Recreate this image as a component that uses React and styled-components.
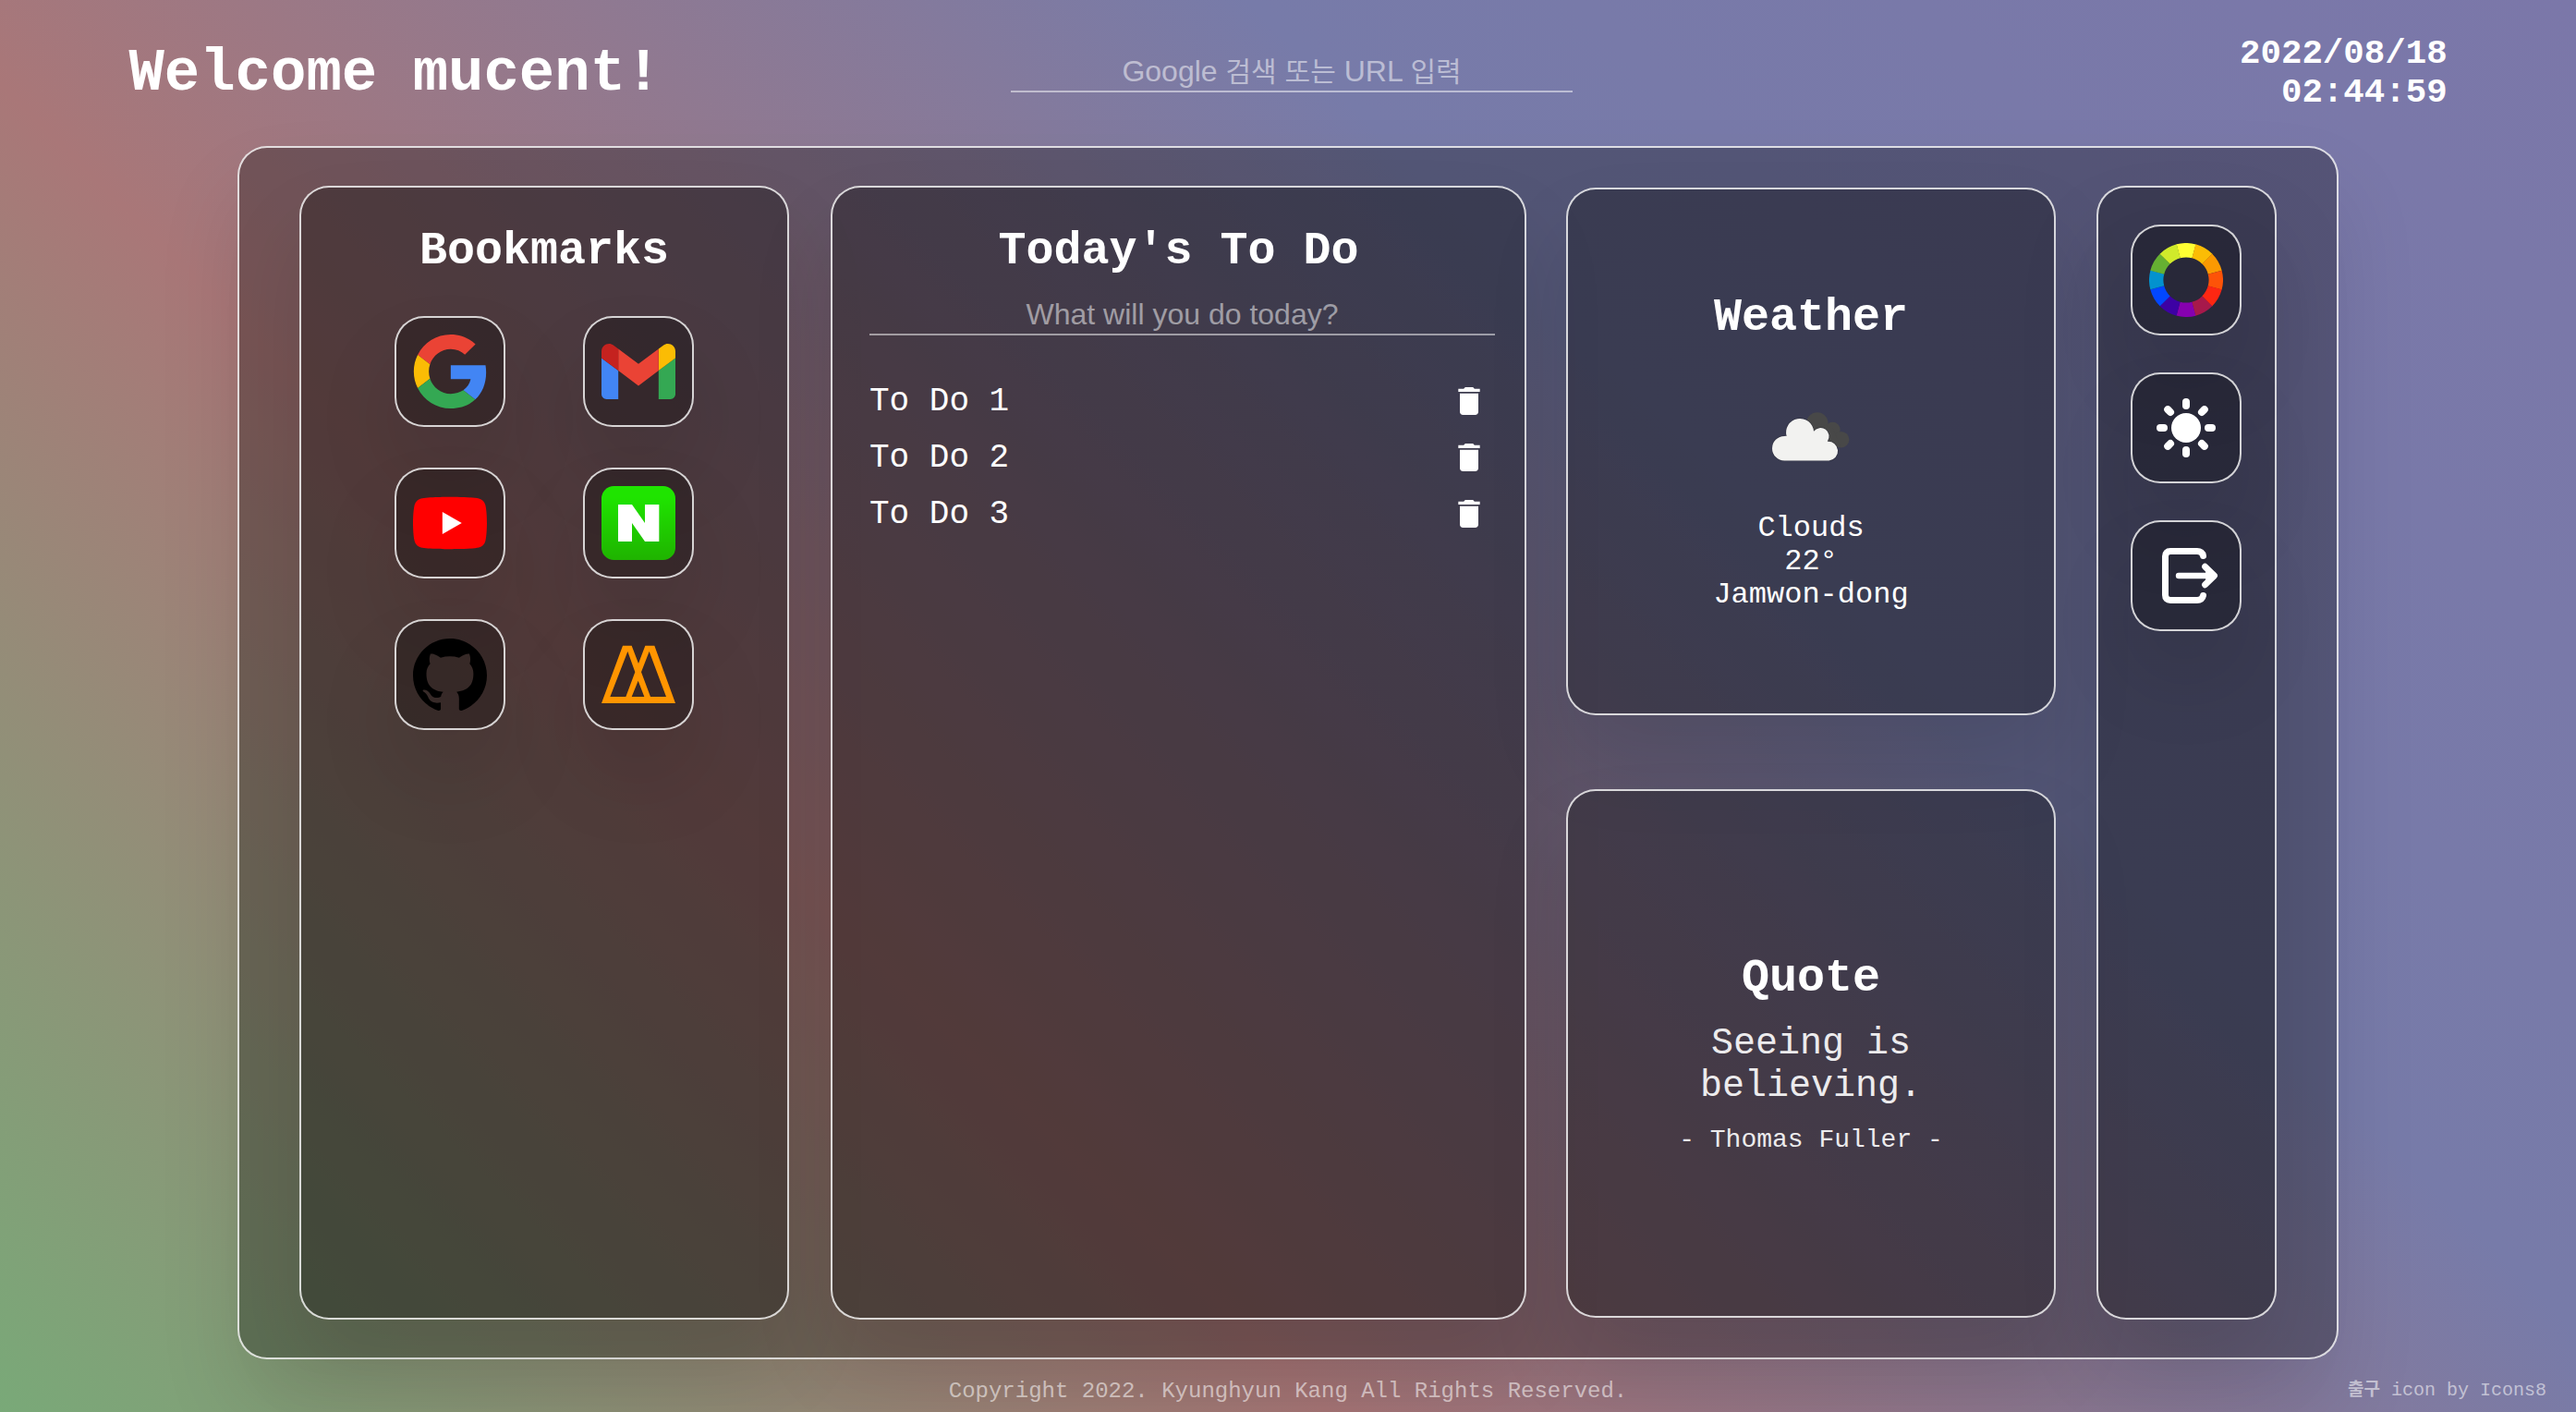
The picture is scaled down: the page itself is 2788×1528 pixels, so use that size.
import React from "react";
import styled, { createGlobalStyle } from "styled-components";
import { MdDelete } from "react-icons/md";

const MONO = '"Courier New", "Liberation Mono", "Noto Sans CJK KR", monospace';
const SANS = '"Liberation Sans", "Noto Sans CJK KR", sans-serif';

const GlobalStyle = createGlobalStyle`
  *, *::before, *::after { box-sizing: border-box; }
  html, body, #root { height: 100%; }
  body {
    margin: 0;
    color: #fff;
    font-family: ${MONO};
    font-size: 32px;
    line-height: 1.1328;
    overflow: hidden;
  }
  h1, h2, h3, p, ul { margin: 0; padding: 0; }
`;

const Page = styled.div`
  display: flex;
  flex-direction: column;
  align-items: center;
  height: 1528px;
  background: linear-gradient(45deg, #79a978, #a97778, #777ba9, #7b77a9);
`;

const Header = styled.header`
  display: grid;
  grid-template-columns: 1fr 608px 1fr;
  align-items: center;
  width: 100%;
  height: 158px;
  padding: 0 139.4px;
`;

const Greeting = styled.h1`
  padding-top: 2px;
  font-size: 64px;
  font-weight: 700;
`;

const Field = styled.div`
  width: ${(p) => p.$width}px;
  height: 43px;
  padding-top: 2px;
  border-bottom: 2px solid rgba(255, 255, 255, 0.5);
  color: rgba(255, 255, 255, 0.5);
  font-family: ${SANS};
  font-size: 32px;
  line-height: 37px;
  text-align: center;
  white-space: nowrap;
`;

const SearchField = styled(Field)`
  margin: -1px 0 0 4px;
`;

const Hangul = styled.span`
  font-size: 30px;
`;

const Clock = styled.h3`
  font-size: 37.44px;
  font-weight: 700;
  text-align: right;
`;

const glass = `
  border: 2px solid rgba(255, 255, 255, 0.8);
  border-radius: 32px;
  background: rgba(0, 0, 0, 0.3);
  box-shadow: 0 50px 90px rgba(0, 0, 0, 0.1);
`;

const Board = styled.main`
  ${glass}
  display: flex;
  flex: none;
  width: 2274px;
  height: 1313px;
  padding: 41px 65px;
`;

const Panel = styled.section`
  ${glass}
  display: flex;
  flex-direction: column;
  align-items: center;
  flex: none;
  width: ${(p) => p.$width}px;
  margin-left: ${(p) => p.$gap || 0}px;
  padding: 40px 0 0;
`;

const Stack = styled.div`
  display: flex;
  flex-direction: column;
  justify-content: space-between;
  width: 530px;
  margin: 2px 0 2px 43px;
`;

const Card = styled.section`
  ${glass}
  display: flex;
  flex-direction: column;
  align-items: center;
  justify-content: center;
  height: ${(p) => p.$height}px;
  text-align: center;
`;

const Title = styled.h2`
  padding-top: 1px;
  font-size: 50px;
  font-weight: 700;
  line-height: 56px;
`;

const LinkGrid = styled.div`
  display: grid;
  grid-template-columns: 120px 120px;
  gap: 44px 84px;
  margin-top: 42px;
`;

const Tile = styled.a`
  ${glass}
  display: flex;
  align-items: center;
  justify-content: center;
  width: 120px;
  height: 120px;
  svg { display: block; width: 80px; height: 80px; }
`;

const TodoField = styled(Field)`
  align-self: flex-start;
  margin: 20px 0 0 40px;
`;

const TodoList = styled.ul`
  display: flex;
  flex-direction: column;
  gap: 20px;
  width: 100%;
  margin-top: 50px;
  padding: 0 40px;
  list-style: none;
`;

const TodoItem = styled.li`
  display: flex;
  align-items: center;
  justify-content: space-between;
  height: 41px;
  font-size: 36px;
  svg { width: 40px; height: 40px; }
`;

const TodoText = styled.span`
  padding-top: 3px;
`;

const Tools = styled.div`
  display: flex;
  flex-direction: column;
  gap: 40px;
  padding-right: 1px;
`;

const CloudIcon = styled.svg`
  width: 84px;
  height: 53px;
  margin: 74px 0 55px;
`;

const Saying = styled.p`
  width: 300px;
  margin: 20px 0;
  font-size: 40px;
  opacity: 0.9;
`;

const Author = styled.p`
  font-size: 28px;
  opacity: 0.9;
`;

const Footer = styled.footer`
  display: grid;
  grid-template-columns: 1fr auto 1fr;
  align-items: center;
  flex: 1;
  width: 100%;
  padding: 11px 32px 0;
  color: rgba(255, 255, 255, 0.55);
  font-size: 24px;
  line-height: 27px;
`;

const Credit = styled.span`
  justify-self: end;
  font-size: 20px;
  line-height: 23px;
`;

const CreditHangul = styled.span`
  font-weight: 700;
  font-size: 19px;
`;

const GoogleLogo = () => (
  <svg viewBox="-0.5 0 48 48">
    <path fill="#EA4335" d="M24 9.5c3.54 0 6.71 1.22 9.21 3.6l6.85-6.85C35.9 2.38 30.47 0 24 0 14.62 0 6.51 5.38 2.56 13.22l7.98 6.19C12.43 13.72 17.74 9.5 24 9.5z" />
    <path fill="#4285F4" d="M46.98 24.55c0-1.57-.15-3.09-.38-4.55H24v9.02h12.94c-.58 2.96-2.26 5.48-4.78 7.18l7.73 6c4.51-4.18 7.09-10.36 7.09-17.65z" />
    <path fill="#FBBC05" d="M10.53 28.59c-.48-1.45-.76-2.99-.76-4.59s.27-3.14.76-4.59l-7.98-6.19C.92 16.46 0 20.12 0 24c0 3.88.92 7.54 2.56 10.78l7.97-6.19z" />
    <path fill="#34A853" d="M24 48c6.48 0 11.93-2.13 15.89-5.81l-7.73-6c-2.15 1.45-4.92 2.3-8.16 2.3-6.26 0-11.57-4.22-13.47-9.91l-7.98 6.19C6.51 42.62 14.62 48 24 48z" />
  </svg>
);

const GmailLogo = () => (
  <svg viewBox="52 42 88 66">
    <path fill="#4285f4" d="M58 108h14V74L52 59v43c0 3.32 2.69 6 6 6" />
    <path fill="#34a853" d="M120 108h14c3.32 0 6-2.69 6-6V59l-20 15" />
    <path fill="#fbbc04" d="M120 48v26l20-15v-8c0-7.42-8.47-11.65-14.4-7.2" />
    <path fill="#ea4335" d="M72 74V48l24 18 24-18v26L96 92" />
    <path fill="#c5221f" d="M52 51v8l20 15V48l-5.6-4.2c-5.94-4.45-14.4-.22-14.4 7.2" />
  </svg>
);

const YoutubeLogo = () => (
  <svg viewBox="0 0 24 24">
    <path fill="#f00" d="M23.498 6.186a3.016 3.016 0 0 0-2.122-2.136C19.505 3.545 12 3.545 12 3.545s-7.505 0-9.377.505A3.017 3.017 0 0 0 .502 6.186C0 8.07 0 12 0 12s0 3.93.502 5.814a3.016 3.016 0 0 0 2.122 2.136c1.871.505 9.376.505 9.376.505s7.505 0 9.377-.505a3.015 3.015 0 0 0 2.122-2.136C24 15.93 24 12 24 12s0-3.93-.502-5.814z" />
    <path fill="#fff" d="M9.545 15.568V8.432L15.818 12z" />
  </svg>
);

const NaverLogo = () => (
  <svg viewBox="0 0 240 240">
    <defs>
      <linearGradient id="naver" x1="0" y1="0" x2="0" y2="1">
        <stop offset="0.15" stopColor="#1fe400" />
        <stop offset="1" stopColor="#1fb300" />
      </linearGradient>
    </defs>
    <rect width="240" height="240" rx="40" fill="url(#naver)" />
    <path fill="#fff" d="M54 60h45l42 60V60h46v120h-46l-42-60v60H54z" />
  </svg>
);

const GithubLogo = () => (
  <svg viewBox="0 0 24 24">
    <path fill="#000" d="M12 .297c-6.63 0-12 5.373-12 12 0 5.303 3.438 9.8 8.205 11.385.6.113.82-.258.82-.577 0-.285-.01-1.04-.015-2.04-3.338.724-4.042-1.61-4.042-1.61C4.422 18.07 3.633 17.7 3.633 17.7c-1.087-.744.084-.729.084-.729 1.205.084 1.838 1.236 1.838 1.236 1.07 1.835 2.809 1.305 3.495.998.108-.776.417-1.305.76-1.605-2.665-.3-5.466-1.332-5.466-5.93 0-1.31.465-2.38 1.235-3.22-.135-.303-.54-1.523.105-3.176 0 0 1.005-.322 3.3 1.23.96-.267 1.98-.399 3-.405 1.02.006 2.04.138 3 .405 2.28-1.552 3.285-1.23 3.285-1.23.645 1.653.24 2.873.12 3.176.765.84 1.23 1.91 1.23 3.22 0 4.61-2.805 5.625-5.475 5.92.42.36.81 1.096.81 2.22 0 1.606-.015 2.896-.015 3.286 0 .315.21.69.825.57C20.565 22.092 24 17.592 24 12.297c0-6.627-5.373-12-12-12" />
  </svg>
);

const PeaksLogo = () => (
  <svg viewBox="0 0 240 240">
    <path
      fill="#ff9500"
      fillRule="evenodd"
      d="M69 26H98L120 84L142 26H172L240 213H0zM85 45L28 192H79L109 112zM119 140L98 192H139zM155 45L129 112L159 192H210z"
    />
  </svg>
);

const WHEEL = [
  "#ffff33", "#fbbc05", "#fb9902", "#fd5308", "#fe2712", "#a7194b",
  "#8601af", "#3d01a4", "#0247fe", "#0392ce", "#66b032", "#d0ea2b",
];

const polar = (r, deg) => {
  const a = ((deg - 90) * Math.PI) / 180;
  return `${(40 + r * Math.cos(a)).toFixed(3)} ${(40 + r * Math.sin(a)).toFixed(3)}`;
};

const ColorWheel = () => (
  <svg viewBox="0 0 80 80">
    {WHEEL.map((color, i) => {
      const from = i * 30 - 15;
      const to = from + 30.3;
      return (
        <path
          key={color}
          fill={color}
          d={`M${polar(40, from)}A40 40 0 0 1 ${polar(40, to)}L${polar(24.6, to)}A24.6 24.6 0 0 0 ${polar(24.6, from)}z`}
        />
      );
    })}
  </svg>
);

const SunIcon = () => (
  <svg viewBox="0 0 80 80">
    <circle cx="40" cy="40" r="16" fill="#fff" />
    {[0, 45, 90, 135, 180, 225, 270, 315].map((deg) => (
      <rect key={deg} x="36" y="8" width="8" height="12" rx="4" fill="#fff" transform={`rotate(${deg} 40 40)`} />
    ))}
  </svg>
);

const ExitIcon = () => (
  <svg viewBox="0 0 80 80" fill="none" stroke="#fff" strokeLinecap="round" strokeLinejoin="round">
    <path strokeWidth="7" d="M58.500 18.500C58 15.500 55.500 13.500 52 13.500H23C19.500 13.500 17.500 15.500 17.500 19V61C17.500 64.500 19.500 66.500 23 66.500H52C55.500 66.500 58 64.500 58.500 61.500" />
    <path strokeWidth="6.4" d="M32 40H68" />
    <path strokeWidth="6.8" d="M60.500 30.200L70.600 40L60.500 49.800" />
    <path fill="#fff" strokeWidth="1" d="M62 35L70 40L62 45z" />
  </svg>
);

const BOOKMARKS = [
  { name: "google", Logo: GoogleLogo },
  { name: "gmail", Logo: GmailLogo },
  { name: "youtube", Logo: YoutubeLogo },
  { name: "naver", Logo: NaverLogo },
  { name: "github", Logo: GithubLogo },
  { name: "peaks", Logo: PeaksLogo },
];

const TODOS = ["To Do 1", "To Do 2", "To Do 3"];

export default function App() {
  return (
    <>
      <GlobalStyle />
      <Page>
        <Header>
          <Greeting>Welcome mucent!</Greeting>
          <SearchField $width={608}>
            Google <Hangul>검색</Hangul> <Hangul>또는</Hangul> URL <Hangul>입력</Hangul>
          </SearchField>
          <Clock>
            2022/08/18
            <br />
            02:44:59
          </Clock>
        </Header>

        <Board>
          <Panel $width={530}>
            <Title>Bookmarks</Title>
            <LinkGrid>
              {BOOKMARKS.map(({ name, Logo }) => (
                <Tile key={name}>
                  <Logo />
                </Tile>
              ))}
            </LinkGrid>
          </Panel>

          <Panel $width={753} $gap={45}>
            <Title>Today's To Do</Title>
            <TodoField $width={677}>What will you do today?</TodoField>
            <TodoList>
              {TODOS.map((todo) => (
                <TodoItem key={todo}>
                  <TodoText>{todo}</TodoText>
                  <MdDelete />
                </TodoItem>
              ))}
            </TodoList>
          </Panel>

          <Stack>
            <Card $height={571}>
              <Title>Weather</Title>
              <CloudIcon viewBox="0 0 84 53">
                <g fill="#484848">
                  <circle cx="48.8" cy="12" r="11.700" />
                  <circle cx="65.500" cy="19" r="8.200" />
                  <circle cx="74.700" cy="29.700" r="8.700" />
                  <path d="M48 12L66 18L74 38L50 36z" />
                </g>
                <path
                  fill="#f2f2f0"
                  stroke="#2c2c36"
                  strokeOpacity="0.55"
                  strokeWidth="1.4"
                  paintOrder="stroke"
                  d="M13.300 52.500A13.300 13.300 0 0 1 13.300 25.900Q14.500 25.800 15.600 26A15 15 0 1 1 45 20.800A8.600 8.600 0 0 1 59.800 31.700A10.400 10.400 0 0 1 61.500 52.500z"
                />
              </CloudIcon>
              <p>
                Clouds
                <br />
                22°
                <br />
                Jamwon-dong
              </p>
            </Card>
            <Card $height={572}>
              <Title>Quote</Title>
              <Saying>Seeing is believing.</Saying>
              <Author>- Thomas Fuller -</Author>
            </Card>
          </Stack>

          <Panel $width={195} $gap={44}>
            <Tools>
              <Tile>
                <ColorWheel />
              </Tile>
              <Tile>
                <SunIcon />
              </Tile>
              <Tile>
                <ExitIcon />
              </Tile>
            </Tools>
          </Panel>
        </Board>

        <Footer>
          <span />
          <span>Copyright 2022. Kyunghyun Kang All Rights Reserved.</span>
          <Credit>
            <CreditHangul>출구</CreditHangul> icon by Icons8
          </Credit>
        </Footer>
      </Page>
    </>
  );
}
